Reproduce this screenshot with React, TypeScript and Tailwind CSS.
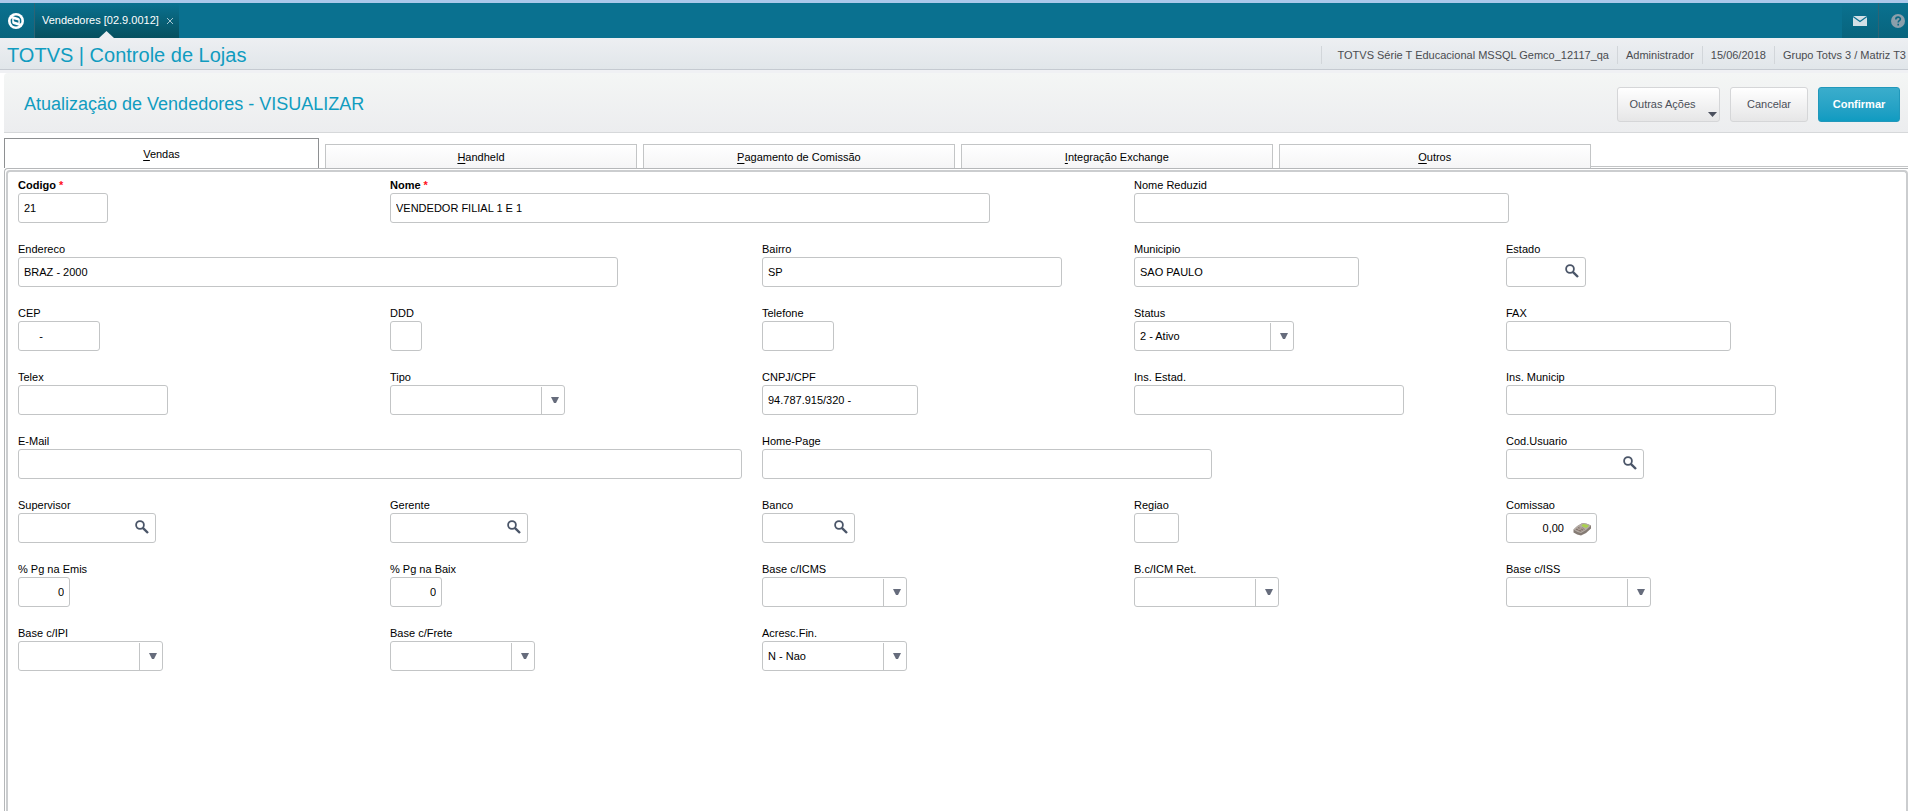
import type { ReactNode } from "react";
import clsx from "clsx";

type FieldProps = {
  id: string;
  label: string;
  width: string;
  value?: string;
  kind?: "text" | "search" | "calc" | "select";
  required?: boolean;
  alignRight?: boolean;
  cell?: string;
};

const fields: FieldProps[] = [
  { id: "codigo", label: "Codigo", width: "w-[90px]", value: "21", required: true },
  { id: "nome", label: "Nome", width: "w-[600px]", value: "VENDEDOR FILIAL 1 E 1", required: true, cell: "col-span-2" },
  { id: "nome-reduzid", label: "Nome Reduzid", width: "w-[375px]", cell: "col-span-2" },

  { id: "endereco", label: "Endereco", width: "w-[600px]", value: "BRAZ - 2000", cell: "col-span-2" },
  { id: "bairro", label: "Bairro", width: "w-[300px]", value: "SP" },
  { id: "municipio", label: "Municipio", width: "w-[225px]", value: "SAO PAULO" },
  { id: "estado", label: "Estado", width: "w-[80px]", kind: "search" },

  { id: "cep", label: "CEP", width: "w-[82px]", value: "     -" },
  { id: "ddd", label: "DDD", width: "w-[32px]" },
  { id: "telefone", label: "Telefone", width: "w-[72px]" },
  { id: "status", label: "Status", width: "w-[160px]", value: "2 - Ativo", kind: "select" },
  { id: "fax", label: "FAX", width: "w-[225px]" },

  { id: "telex", label: "Telex", width: "w-[150px]" },
  { id: "tipo", label: "Tipo", width: "w-[175px]", kind: "select" },
  { id: "cnpj", label: "CNPJ/CPF", width: "w-[156px]", value: "94.787.915/320 -" },
  { id: "ins-estad", label: "Ins. Estad.", width: "w-[270px]" },
  { id: "ins-municip", label: "Ins. Municip", width: "w-[270px]" },

  { id: "email", label: "E-Mail", width: "w-[724px]", cell: "col-span-2" },
  { id: "home-page", label: "Home-Page", width: "w-[450px]", cell: "col-span-2" },
  { id: "cod-usuario", label: "Cod.Usuario", width: "w-[138px]", kind: "search" },

  { id: "supervisor", label: "Supervisor", width: "w-[138px]", kind: "search" },
  { id: "gerente", label: "Gerente", width: "w-[138px]", kind: "search" },
  { id: "banco", label: "Banco", width: "w-[93px]", kind: "search" },
  { id: "regiao", label: "Regiao", width: "w-[45px]" },
  { id: "comissao", label: "Comissao", width: "w-[91px]", value: "0,00", kind: "calc", alignRight: true },

  { id: "pg-emis", label: "% Pg na Emis", width: "w-[52px]", value: "0", alignRight: true },
  { id: "pg-baix", label: "% Pg na Baix", width: "w-[52px]", value: "0", alignRight: true },
  { id: "base-icms", label: "Base c/ICMS", width: "w-[145px]", kind: "select" },
  { id: "icm-ret", label: "B.c/ICM Ret.", width: "w-[145px]", kind: "select" },
  { id: "base-iss", label: "Base c/ISS", width: "w-[145px]", kind: "select" },

  { id: "base-ipi", label: "Base c/IPI", width: "w-[145px]", kind: "select" },
  { id: "base-frete", label: "Base c/Frete", width: "w-[145px]", kind: "select" },
  { id: "acresc-fin", label: "Acresc.Fin.", width: "w-[145px]", value: "N - Nao", kind: "select" },
];

const tabs = ["Vendas", "Handheld", "Pagamento de Comissão", "Integração Exchange", "Outros"];

function SearchIcon() {
  return (
    <svg width="14" height="14" viewBox="0 0 14 14" fill="none" stroke="#4a5568">
      <circle cx="5" cy="5" r="3.9" strokeWidth="1.8" />
      <path d="M7.8 7.8l5.2 5.2" strokeWidth="2.4" />
    </svg>
  );
}

function CalcIcon() {
  return (
    <svg width="19" height="14" viewBox="0 0 19 14">
      <path d="M0.5 7.5Q5 3 9.5 1Q14 1.4 18 3.6V6.4Q13.5 11.5 8 13.5Q4 13 0.5 10.6Z" fill="#857b74" />
      <path d="M0.5 7.5Q5 3 9.5 1Q14 1.4 18 3.6Q13.5 8.6 8 11Q4 10.2 0.5 7.5Z" fill="#b5ada6" />
      <path d="M10 2Q13 2.2 16 3.8L13.2 6Q11 4.8 8.4 4Z" fill="#a9d24c" />
      <path d="M2.4 7.4L6.4 4.6Q9.4 5.4 12 7.2L7.8 9.8Q5 9.2 2.4 7.4Z" fill="#85756d" />
      <path d="M4 6.4Q7 7 9.4 8.8M6 5Q8.6 5.6 11 7.6M4.6 8.4L9 5.6" fill="none" stroke="#c9beb6" strokeWidth="0.6" />
    </svg>
  );
}

function Field({ id, label, width, value = "", kind = "text", required, alignRight, cell }: FieldProps) {
  return (
    <div className={clsx("min-w-0", cell)}>
      <label htmlFor={id} className={clsx("block h-4 leading-4 whitespace-nowrap", required && "font-bold")}>
        {label}
        {required && <span className="text-[#ff1020]"> *</span>}
      </label>
      <div className={clsx("relative flex h-[30px] rounded-[3px] border border-[#c3c5c6] bg-white", width)}>
        {kind === "select" ? (
          <>
            <select
              id={id}
              defaultValue={value}
              className="w-full appearance-none bg-transparent pl-[5px] pr-6 outline-none"
            >
              <option value={value}>{value}</option>
            </select>
            <span className="pointer-events-none absolute top-px right-0 bottom-0 flex w-[23px] items-center justify-center border-l border-[#c3c5c6] pb-0.5 pl-1">
              <svg width="8" height="6" viewBox="0 0 8 6" fill="#666c7c">
                <path d="M0 0h8L5 6H3z" />
              </svg>
            </span>
          </>
        ) : (
          <input
            id={id}
            type="text"
            defaultValue={value}
            className={clsx(
              "w-full min-w-0 flex-1 bg-transparent outline-none",
              kind === "text" && "px-[5px]",
              kind === "search" && "pl-[5px]",
              kind === "calc" && "pl-[5px] pr-2",
              alignRight && "text-right",
            )}
          />
        )}
        {kind === "search" && (
          <button type="button" aria-label={"Pesquisar " + label} className="w-7 shrink-0 pb-0.5 pl-2">
            <SearchIcon />
          </button>
        )}
        {kind === "calc" && (
          <button type="button" aria-label="Calculadora" className="w-6 shrink-0 pt-0.5 pl-px">
            <CalcIcon />
          </button>
        )}
      </div>
    </div>
  );
}

function Info({ children }: { children: ReactNode }) {
  return <span className="border-l border-[#d2d6da] px-2 leading-[18px]">{children}</span>;
}

export default function App() {
  return (
    <div className="flex min-h-screen flex-col bg-white font-['Liberation_Sans',Arial,sans-serif] text-[11px] text-black">
      {/* Barra superior */}
      <header className="flex h-[38px] border-t-3 border-[#abc8ea] bg-[#0a7190] text-white">
        <button type="button" aria-label="Início" className="flex w-[35px] items-center justify-center border-r border-[#2d6374] bg-linear-to-b from-[#0a7190] to-[#08647d] pr-0.5">
          <svg width="16" height="16" viewBox="0 0 16 16">
            <circle cx="8" cy="8" r="8" fill="#fff" />
            <path d="M5 3.2Q8.6 1.8 11.4 3.6Q13.8 5.6 13.4 9.2L11.8 11V6.6Q11.6 5.2 10 4.8Z" fill="#0a6d8a" />
            <path d="M2.6 6.8L4.2 5V9.4Q4.4 10.8 6 11.2L11 12.8Q7.4 14.2 4.6 12.4Q2.2 10.4 2.6 6.8Z" fill="#0a6d8a" />
            <path d="M5.6 6.2L10.4 7.6V9.8L6.4 8.6Q5.6 8 5.6 6.2Z" fill="#0a6d8a" />
          </svg>
        </button>
        <div className="relative flex w-36 items-center gap-2 bg-linear-to-b from-[#0a7190] to-[#06505f] pl-[7px]">
          <span>Vendedores [02.9.0012]</span>
          <button type="button" aria-label="Fechar aba">
            <svg width="6" height="6" viewBox="0 0 6 6" stroke="#a5c5d0">
              <path d="M0 0l6 6M6 0l-6 6" />
            </svg>
          </button>
          <svg className="absolute bottom-0 left-16" width="15" height="7" viewBox="0 0 15 7" fill="#eceef1">
            <path d="M0 7L7.5 0L15 7z" />
          </svg>
        </div>
        <div className="ml-auto flex bg-linear-to-b from-[#0a7190] to-[#08647d]">
          <button type="button" aria-label="Mensagens" className="flex w-[37px] items-center justify-center border-r border-[#2d6374]">
            <svg width="14" height="10" viewBox="0 0 14 10">
              <path d="M0 0h14v10H0z" fill="#d3e0e6" />
              <path d="M0 0.6l7 5 7-5" fill="none" stroke="#0a7190" strokeWidth="1.2" />
            </svg>
          </button>
          <button type="button" aria-label="Ajuda" className="flex w-[29px] items-center justify-end pr-[3px]">
            <svg width="14" height="14" viewBox="0 0 14 14">
              <circle cx="7" cy="7" r="7" fill="#8b9fab" />
              <path d="M4.8 5.4c0-3 4.6-3 4.6-.3 0 1.6-2.2 1.7-2.2 3.4M7.2 9.8v1.6" fill="none" stroke="#0a6783" strokeWidth="1.6" />
            </svg>
          </button>
        </div>
      </header>

      {/* Produto e dados da sessão */}
      <div className="flex h-8 items-center justify-between border-b border-[#c5cad1] bg-linear-to-b from-[#edeff2] to-[#e1e6ea] pt-0.5 pl-[7px]">
        <h1 className="text-xl text-[#109cc0]">TOTVS | Controle de Lojas</h1>
        <div className="flex text-[#4a4c50]">
          <span className="border-l border-[#d2d6da] pr-2 pl-4 leading-[18px]">
            TOTVS Série T Educacional MSSQL Gemco_12117_qa
          </span>
          <Info>Administrador</Info>
          <Info>15/06/2018</Info>
          <span className="border-l border-[#d2d6da] pr-0.5 pl-2 leading-[18px]">Grupo Totvs 3 / Matriz T3</span>
        </div>
      </div>

      {/* Título da rotina */}
      <div className="h-[3px] bg-[#f0f1f4]" />
      <div className="ml-1 flex h-[60px] items-center justify-between rounded-tl border-b border-[#d6d8da] bg-linear-to-b from-[#f4f6f5] to-[#ecedef] pt-1 pr-2 pl-5">
        <h2 className="pb-0.5 text-lg text-[#109cc0]">Atualizaçäo de Vendedores - VISUALIZAR</h2>
        <div className="flex gap-2.5 text-[#4b4f58]">
          <button type="button" className="relative h-[35px] w-[103px] rounded-[3px] border border-[#d5d6d8] bg-linear-to-b from-white to-[#e6e6e7] pr-3">
            Outras Ações
            <svg className="absolute right-0.5 bottom-1" width="9" height="5" viewBox="0 0 9 5" fill="#4b505e">
              <path d="M0 0h9L4.5 5z" />
            </svg>
          </button>
          <button type="button" className="h-[35px] w-[78px] rounded-[3px] border border-[#d5d6d8] bg-linear-to-b from-white to-[#e6e6e7]">
            Cancelar
          </button>
          <button type="button" className="h-[35px] w-[82px] rounded-[3px] border border-[#2198bb] bg-linear-to-b from-[#3aadcc] to-[#0f9bc1] font-bold text-white">
            Confirmar
          </button>
        </div>
      </div>

      {/* Pastas */}
      <div className="mt-[5px] ml-1 flex items-end">
        <div role="tablist" className="flex w-5/6 items-end gap-1.5">
          {tabs.map((tab, i) => (
            <button
              key={tab}
              type="button"
              role="tab"
              aria-selected={i === 0}
              className={clsx(
                "border border-b-0 pt-0.5",
                i === 0
                  ? "h-[30px] w-[315px] border-[#8e9092] bg-white"
                  : "h-6 flex-1 border-[#c3c5c6] bg-linear-to-b from-white to-[#f5f5f6]",
              )}
            >
              <span className="underline underline-offset-2">{tab[0]}</span>
              {tab.slice(1)}
            </button>
          ))}
        </div>
        <div className="h-0.5 flex-1 border-t border-[#c3c5c6]" />
      </div>

      {/* Formulário */}
      <main className="ml-1 flex flex-1 flex-col rounded-tl border-t border-l border-[#b5b7b9] pt-px pl-px">
        <form className="grid flex-1 grid-cols-5 content-start gap-y-[18px] rounded-t border-2 border-b-0 border-[#cbcdcf] pt-[5px] pr-7 pl-2.5">
          {fields.map((field) => (
            <Field key={field.id} {...field} />
          ))}
        </form>
      </main>
    </div>
  );
}
